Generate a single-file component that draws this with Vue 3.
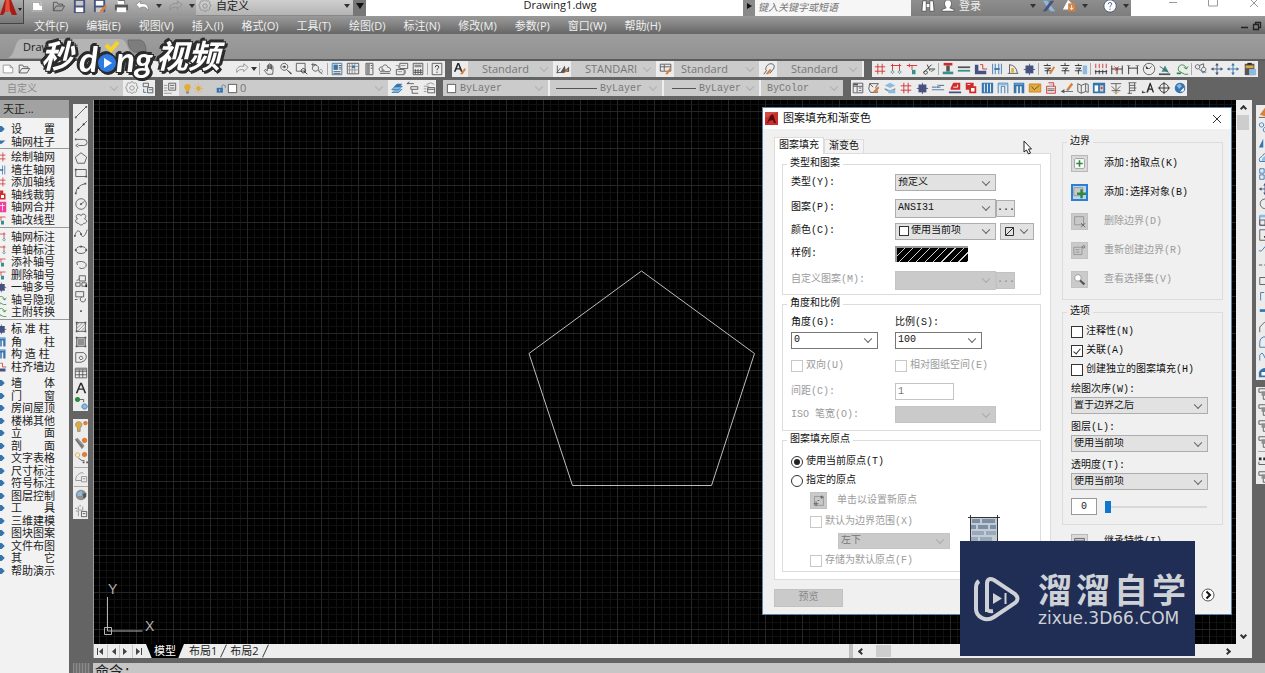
<script setup>
import { h, ref } from 'vue'

const tones = {
  k: '#555555', b: '#3574ad', r: '#d22b2b', g: '#2c8a3c', y: '#e2ad35', o: '#d9803c', w: '#ffffff',
  c: '#8dbbe0', m: '#ee3f9f', n: '#46527f', s: '#8f8f8f', d: '#2a2a2a', l: '#c9c9c9', t: '#37908a'
}

// Each shape is "<tone> <path>": a lower-case tone strokes, an upper-case tone fills.
const glyphs = {
  new: 'W M2 3h9l3 3v7H2z;s M2.5 3.5h8l3 3v6h-11zM10.5 3.5v3h3',
  open: 'k M2.5 12.5v-9h4l1 2h5v2M2.5 12.5l3-5h9l-3 5z',
  save: 'N M2 1h12v14H2z;L M4 2h8v5H4z;W M4 9h8v5H4z',
  saveas: 'N M1 1h12v13H1z;W M3 2h8v5H3z;L M3 9h8v5H3z;O M7 13l6-7 2 2-6 7z',
  print: 'W M4 1h8v5H4z;K M1 6h14v6H1z;W M3 9h10v5H3z;k M4.5 1.5h7v4',
  undo: 'W M1 6l5-4v3c6-1 9 2 8 7-2-3-4-4-8-3v2z;s M1 6l5-4v3c6-1 9 2 8 7-2-3-4-4-8-3v2z',
  redo: 's M15 6l-5-4v3c-6-1-9 2-8 7 2-3 4-4 8-3v2z',
  gear: 's M8 5.5a2.5 2.5 0 1 0 .1 0M6.5 2l.5-1h2l.5 1 1.5.6 1-.6 1.6 1.6-.6 1 .5 1.4 1 .5v2l-1 .5-.6 1.5.6 1-1.6 1.6-1-.6-1.4.5-.5 1h-2l-.5-1-1.5-.6-1 .6L2 11.400l.6-1L2 9 1 8.500v-2L2 6l.6-1.500-.6-1L3.600 2l1 .6z',
  hand: 'k M5 14L1.500 9.500l1-1L5 10V4q1-1 1.500 0V8 2.500q1-1 1.700 0V8 3q1-1 1.600 0v5.500V5q1-1 1.600 0v5.500L11 14z',
  zoom: 'k M6 1.500a4 4 0 1 0 .1 0M9 9l5 5;d M4 5.500h4M6 4v3;K M10 9l5 4-2 1z',
  zoomwin: 'k M1.500 1.500h10v9h-10z;d M10 10l4 4M9.500 7.500a2.500 2.500 0 1 0 .1 0',
  zoomprev: 'k M5 3.500a3.500 3.500 0 1 0 .1 0M8 9l5 5M1 3h5M1 3l2-2M1 3l2 2;s M11 8.500a2 2 0 1 0 .1 0',
  props: 'b M2.500 1.500h11v13h-11z;B M4 3h5v6H4z;k M10 4h3M10 6h3M10 8h3M4 11h8M4 13h8',
  design: 'k M1.500 1.500h13v12h-13z;s M4 2v12M7 2v12M10 2v12M2 5h12M2 9h12;B M7 4h3v3H7z',
  palette: 'k M4.500 1.500h8v13h-8z;S M5 2h4v12H5z;k M10 4h2M10 7h2',
  markup: 'k M2 10c-2-3 1-5 3-4 1-4 6-3 6 0 4 0 4 4 2 5H3zM2 13h12;S M4 6l5 5H4z',
  sheet: 'k M5.500 1.500h9v6h-9zM1.500 8.500h9v6h-9z;s M7 4h5M3 11h5M1 4h3v3M12 9v4h-2',
  calc: 'k M2.500 1.500h11v13h-11z;S M4 3h8v3H4z;k M5 8v6M8 8v6M11 8v6M3 10h10M3 12h10',
  help: 'k M2.500 1.500h11v13h-11z;d M6 6q0-2 2-2t2 2q0 1-2 2.500v1M8 11v1.500',
  astyle: 'D M1 11L5 1h2l4 10H9L8 8.500H4L3 11zM4.500 7h3L6 3z;O M8 14l5-7 2 1-4 6z',
  dimstyle: 'k M1.500 4v9M1 12h9M1 12l4-5;K M5 12l5-8 1 5 4-4v6z;O M8 13l5-5 1 2z',
  tabstyle: 'k M1.500 2.500h12v8h-12zM1.500 5.500h12M6 3v7;O M7 14l5-7 2 1-4 6z',
  mlstyle: 'k M5 10c-2-3 1-8 5-8 4 0 5 3 3 6l-4 5M5 10L2 14;O M4 14l5-6 2 1-4 5z',
  state: 'k M2.500 2.500h6v4h-6zM7.500 7.500h6v6h-6z;b M3 9v4h3M9 10h4',
  layers: 'k M6.500 2.500h8v8h-8z;s M1 5h4M1 8h4M1 11h4M1 14h9;k M8 5h5M8 8h5',
  bulb: 'Y M8 1.500c5 0 6 5 3 8v2H5v-2c-3-3-2-8 3-8z;k M6 13h4M6 14.500h4',
  sun: 'Y M8 4.500a3.500 3.500 0 1 0 .1 0;y M8 1v2M8 13v2M1 8h2M13 8h2M3 3l1.500 1.500M11.500 11.500L13 13M13 3l-1.500 1.500M4.500 11.500L3 13',
  lock: 'B M1 7h9v7H1z;b M8.500 7V4q2-3 5 0v3;W M5 9h1v3H5z',
  square: 'W M2 2h12v12H2z;d M2 2h12v12H2z',
  stack: 'C M2 10l4-4h8l-4 4zM2 13l4-4h8l-4 4z;b M2 10l4-4h8l-4 4zM2 13h8l4-4;B M4 7l4-4h6l-3 4z',
  layprev: 'k M1 3h8M1 3l3-2M5.500 6.500h8v3h-8zM7 10v4h7',
  laystate: 'k M6.500 7.500h8v6h-8zM6.500 9.500h8;s M2 6h6M2 9h3M2 12h3M5 4l5-2 4 2',
  grid: 'r M5.500 2v12M10.500 2v12M2 5.500h12M2 10.500h12',
  gridnum: 'r M4 4v6M12 4v6M2 4h12;t M4 10a1.500 1.500 0 1 0 .1 0M12 10a1.500 1.500 0 1 0 .1 0;r M4 2v2M12 2v2',
  gridone: 'r M2 4h12M8 4v5M5 2v4;T M8 9h4v5H8z',
  cut: 'd M2 12l9-9M6 3l3 7M9 8h6M4 10a2 2 0 1 0 .1 0;g M10 11l4-2',
  beam: 'R M3 1h10v3H3z;K M6 4h4v7H6z;T M2 11h12v3H2z',
  wall: 'K M1 5h14v2H1z;T M1 9h14v2H1z',
  wallbox: 'N M1 3h4v7h9v4H1z;r M7 3h3v5h5',
  opening: 'b M3 2v12M13 2v12M6 2v12M10 2v12;B M5 7h6v2H5z',
  door: 'k M2 13h12M4 3v10M4 3q8 1 9 10;Y M6 7h3v5H6z',
  column: 'N M4 4h9v9H4z;n M8.500 2v13M2 8.500h13',
  texta: 'd M2 4h8M6 2v2M3 7h7L6 9v5M3 10h8;O M8 13l5-8 2 1-5 8z',
  textz: 'd M3 4h10M8 1v3M5 7h6L8 9v5M4 10h9',
  textc: 'd M1 4h8M5 2v2M2 7h6L5 9v5M1 10h8;C M10 4h5v10h-5z',
  dim3: 'd M2 9v5M6 9v5M10 9v5M14 9v5M1 11h14;r M2 2v5M6 2v5M10 2v5M14 2v5',
  dimr: 'd M2 4v10M14 4v10M2 8h12M8 6v8;r M5 5l4 5M10 5l-4 5',
  dim2: 'd M3 4v10M13 4v10M3 7h10;s M1 4h4M11 4h4',
  radius: 'k M8 1.500a6.500 6.500 0 1 0 .1 0;D M8 8L4 4l1 4z;k M8 8l3-3',
  arc: 'K M1 13h13v2H1z;T M4 11l4-7 4 7z;k M2 5l10 7',
  rotate: 'G M2 12h5v2H2z;g M4 10c-2-8 8-9 9-2M13 8l-3-2M13 8l2-3M4 10l7 4h4',
  chain: 'k M4 3a2.500 2.500 0 1 0 .1 0M11 6a2.500 2.500 0 1 0 .1 0M9 11.500h5M6 4l5-2v4;b M6 8l5 5',
  move: 'n M8 2v12M2 8h12;N M8 1l2 3H6zM8 15l2-3H6zM1 8l3-2v4zM15 8l-3-2v4z',
  movec: 'b M8 2v12M2 8h12;B M8 1l2 3H6zM8 15l2-3H6zM1 8l3-2v4zM15 8l-3-2v4z',
  paste: 'K M2 2h11v13H2z;Y M3 4h9v3H3z;C M7 8h8v7H7z;D M5 1h5v2H5z',
  doc: 'k M2.500 2.500h11v11h-11zM2.500 6h11M7 6v7;n M9 8h3M9 11h3;K M3 3h5v2H3z',
  scroll: 'k M3 3h10l-3 4 2 6H4L2 9zM3 3l4 4;O M7 12l6-6 1 2-5 6z',
  sheets: 'C M2 5l6-3 6 3-6 3z;S M2 8l6 3 6-3v2l-6 3-6-3z;C M6 10h8v4H6z',
  dash: 'k M1 7h5M9 5h6;b M1 10h14M8 4v4M6 7h5',
  red: 'R M3 8l3-6h8v8H3z;N M1 12h14v2H1z;w M6 7h5V4',
  redbox: 'R M2 2h9v8H2z;R M6 6h8v8H6z;W M8 8h4v4H8z;w M4 4h3',
  shelf: 'B M2 2h13v12H2z;w M5 3v10M8.500 3v10M12 3v10',
  gate: 'b M2.500 14V2.500h11V14M6 14V6h4v8;C M3 3h10v2H3z',
  gates: 'B M2 2h12v12h-3V6H9v8H7V6H5v8H2z;C M3 3h10v1H3z',
  mail: 'Y M1 3h14v10H1z;o M1.500 3.500h13v9h-13z;k M4 6l3 4 6-5',
  printred: 'r M3 6h10v8H3zM5 2h6v4;k M4 9h8M4 11h8;L M6 3h4v3H6z',
  brush: 'O M7 10l6-8 2 2-6 8z;b M2 12h13;K M1 12l4-3v5z',
  book: 'k M2 3l4 2v9l-4-2zM6 5l5-2v9l-5 2M11 3l3 1v9l-3-1',
  window: 'B M1 2h14v12H1z;W M3 5h4v7H3z;L M9 5h4v7H9z;R M10 7h2v2h-2z',
  tree: 'k M2 3h12M8 3v12M3 6l4 4M13 6l-4 4M3 11h10;y M5 13h6',
  bars: 'k M4 2h9M5 2v13M5 5h7M5 8h8M5 11h7M3 14h5M11 2v9',
  triA: 'D M6 13L10 2h1l4 11h-1.500L12 10H9l-1 3zM9.500 8.500h2.500L10.500 5z;d M1 13h4M2 11v3',
  target: 'd M8 3a5 5 0 1 0 .1 0M8 1v14M1 8h14',
  globe: 'B M8 2a6 6 0 1 0 .1 0z;C M4 5l4-2 2 3-3 3z;W M8 12l5-5-1 5z',
  line: 'k M2 14L14 2;K M1 13h2v2H1zM13 1h2v2h-2z',
  xline: 'k M1 15L15 1;D M4 10h2v2H4zM10 4h2v2h-2z',
  pline: 'k M3 5h8q4 0 4 3.500T11 12H5M5 10l-3 2 3 2;K M1 4h2v2H1z',
  polygon: 'k M8 2l6.500 5-2.500 7H4L1.500 7z',
  rect: 'k M2 4h12v8H2z;K M1 3h2v2H1zM13 11h2v2h-2z',
  arc2: 'k M2 14Q3 5 13 3;K M1 13h2v2H1zM12 2h2v2h-2zM4 7h2v2H4z',
  circle: 'k M8 2a6 6 0 1 0 .1 0M8 8l4-3;K M7 7h2v2H7z',
  cloud: 'k M5 13c-4 0-4-5-1-5-4-4 1-7 4-4 3-4 8 0 4 4 4 1 3 5-1 5-2 3-4 2-6 0z',
  spline: 'k M1 10C3 2 7 4 8 8s4 5 7-5;K M0 9h2v2H0zM7 7h2v2H7z',
  ellipse: 'k M8 4C0 4 0 12 8 12s8-8 0-8;K M7 3h2v2H7zM1 7h2v2H1zM13 7h2v2h-2z',
  earc: 'k M3 5c4-2 11-1 11 3s-6 5-8 3M3 5l1 3',
  block: 'k M2 10h5v4H2zM6 2h7v6H6zM3 8l3-3M9 10h5v4H9z;D M13 12h2v3h-2z',
  mkblock: 'k M2 3h9v6H2zM9 9a3 3 0 1 0 4 2M1 12h3',
  dot: 'K M7 7h2v2H7z',
  hatch: 'k M3 3h10v10H3z;s M3 6l3-3M3 10l7-7M4 13l9-9M8 13l5-5;K M2 2h2v2H2zM12 2h2v2h-2zM2 12h2v2H2zM12 12h2v2h-2z',
  grad: 'S M4 4h8v8H4z;k M3 3h10v10H3z;K M2 2h2v2H2zM12 2h2v2h-2zM2 12h2v2H2zM12 12h2v2h-2z',
  region: 'k M2 3h9q4 2 3 6t-6 5H2zM8 7a2 2 0 1 0 .1 0',
  table: 'k M1.500 2.500h13v11h-13zM1.500 6h13M1.500 10h13M6 3v10M10 3v10;S M2 3h12v2H2z',
  mtext: 'D M2 14L7 2h2l5 12h-2l-1.500-4h-5L4 14zM6 8.500h4L8 4z',
  addsel: 'G M4 1a3 3 0 1 0 .1 0z;C M12 9a3 3 0 1 0 .1 0z;k M7 4h4v3;b M12 9a3 3 0 1 0 .1 0',
  lightset: 'Y M5 2c5 0 5 5 2 7v4H4V9C1 7 1 2 5 2z;s M5 2c5 0 5 5 2 7v4H4V9C1 7 1 2 5 2z;O M13 1a2.500 2.500 0 1 0 .1 0z',
  pinset: 'S M1 4l3-2 8 9-3 4z;O M12 2a3 3 0 1 0 .1 0z;k M2 4l8 9',
  dotset: 'y M4 2a2.500 2.500 0 1 0 .1 0;O M12 1a3 3 0 1 0 .1 0z;k M5 8l4 3h3;K M10 12h2v2h-2zM14 12h2v2h-2z',
  viewset: 's M2 12C1 6 9 1 11 4M2 12h6M8.500 7.500h6v6h-6zM10 10h3',
  ball: 'S M8 2a6 6 0 1 0 .1 0z;C M4 5l5-2v6H4z;K M10 7l4-2v5l-3 2z',
  sunset: 's M5 3v4h5V3M2 8h3M5 8v6M1 5h3M7 1v2;k M8.500 8.500h6v6h-6zM10 11h3',
  erase: 'O M2 10l6-8 6 3-5 7z;k M1 13h8', copy: 'b M4 2a2.500 2.500 0 1 0 .1 0M9 7a3 3 0 1 0 .1 0',
  mirror: 'B M1 13L6 3v10zM8 3l6 10H8z', offset: 'b M2 12c-2-6 3-4 4-8 4-3 9 0 9 8z;C M4 11q1-5 6-6v6z',
  array: 'b M2 2h5v5H2zM9 2h5v5H9zM2 9h5v5H2zM9 9h5v5H9z', rot: 'k M12 4a5.500 5.500 0 1 0 1 6M12 1v4H8',
  scale: 'b M2 3h12v11H2z;k M2 8h6v6H2z;C M2 2h12v3H2z', stretch: 'k M2 2h10v12H2z;D M7 9h5V7l3 3-3 3v-2H7z',
  trim: 'b M1 9h3l6-7;k M8 9h6', extend: 'k M1 8h4M7 8h2M11 8h4', breakp: 'k M2 4h12v8H2z',
  brk: 'b M3 13V4h4;k M9 4h5v9', join: 'B M2 6h12v3H2z', chamfer: 'k M2 14V8l6-6h6', fillet: 'b M2 14V9q0-7 7-7h6v12z',
  blend: 'b M2 12V6q3-5 5 1t7 3', explode: 'B M1 8q5-7 12-3v9H1z;W M4 8h4v4H4z',
  order: 'k M1 2h11v4H1zM6 9h9v5H6z;S M4 5h8v5H4z', abc: 'k M1 9v3h12;D M1 4h3v3H1zM6 4h3v3H6zM11 4h3v3h-3z',
  binoc: 'W M2 2h4v12H1zM10 2h4l1 12h-5zM6 5h4v4H6z;k M2 2h4v12H1zM10 2h4l1 12h-5zM6 5h4',
  person: 'W M8 1c6 0 4 8 2 9l5 2v2H1v-2l5-2C4 9 2 1 8 1z;k M8 1c6 0 4 8 2 9l5 2v2H1v-2l5-2C4 9 2 1 8 1z',
  exch: 'C M1 2h5l9 12h-5z;N M10 2h4l-9 12H1z', cloudA: 'W M1 12L7 1l5 5v6z;O M7 5h8v9H7z;w M11 7v5M9 10l2 2 2-2',
  qmark: 'W M8 1a7 7 0 1 0 .1 0z;n M8 1a7 7 0 1 0 .1 0M6 6q0-2 2-2t2 2q0 1-2 2.500v1M8 11v1.500',
  arrow: 'B M4 4h5l4 4-4 4H4z',
  down: 'B M2 6h12l-6 5z',
  pink: 'M M1 1h14v14H1z;w M5 3v10M10 3v10M3 6h10',
  pick: 'W M3 2h10l1 1v10l-1 1H3l-1-1V3z;s M3 2h10l1 1v10l-1 1H3l-1-1V3z;G M7 4h2v3h3v2H9v3H7V9H4V7h3z',
  select: 'L M1 2h11v10H1z;s M1 2h11v10H1z;G M9 4h3v4h4v3h-4v4H9v-4H5V8h4z',
  remove: 'L M2 2h11v10H2z;s M2 2h11v10H2z;k M10 10l5 5M15 10l-5 5',
  redobd: 'L M1 4h10v9H1z;s M1 4h10v9H1zM3 7h5M3 10h5;k M13 2a1.500 1.500 0 1 0 .1 0',
  view: 'W M6 2a4 4 0 1 0 .1 0z;s M6 2a4 4 0 1 0 .1 0;K M9 8l6 5-2 2-5-5z',
  inherit: 'L M2 3h12v10H2z;k M2 3h12v10H2zM2 6h12M8 13l6-5',
  origin: 'L M3 3h11v11H3z;s M3 3h11v11H3z;k M5 9v6M2 12h6M12 2v4M10 4h4M7 8h2'
}
const shape = (s) => {
  const code = s[0]
  const tone = tones[code.toLowerCase()]
  return code === code.toLowerCase()
    ? h('path', { d: s.slice(2), fill: 'none', stroke: tone })
    : h('path', { d: s.slice(2), fill: tone })
}
const Icon = (p) => h('svg', { viewBox: '0 0 16 16', 'aria-hidden': 'true' }, (glyphs[p.name] || '').split(';').filter(Boolean).map(shape))
Icon.props = ['name']

const quick = ['new', 'open', 'save', 'saveas', 'print']
const menus = ['文件(F)', '编辑(E)', '视图(V)', '插入(I)', '格式(O)', '工具(T)', '绘图(D)', '标注(N)', '修改(M)', '参数(P)', '窗口(W)', '帮助(H)']
const zoomTools = ['hand', 'zoom', 'zoomwin', 'zoomprev', '|', 'props', 'design', 'palette', 'markup', 'sheet', 'calc', '|', 'help']
const styles = [
  { icon: 'astyle', text: 'Standard', pad: true }, { icon: 'dimstyle', text: 'STANDARI', pad: true },
  { icon: 'tabstyle', text: 'Standard', pad: false }, { icon: 'mlstyle', text: 'Standard', pad: true }
]
const archTop = ['grid', 'gridnum', 'gridone', 'cut', '|', 'beam', 'wall', 'wallbox', 'opening', 'door', 'column', '|', 'texta', 'textz', 'textc', '|', 'dim3', 'dimr', 'dim2', 'radius', 'arc', 'rotate', '|', 'chain', 'move', 'movec', 'paste']
const archLow = ['doc', 'scroll', 'sheets', 'grid', 'column', 'dash', 'red', 'redbox', 'shelf', 'gate', 'gates', 'mail', 'printred', 'brush', 'book', 'window', 'tree', 'bars', 'triA', 'target', 'globe']
const drawTools = ['line', 'xline', 'pline', 'polygon', 'rect', 'arc2', 'circle', 'cloud', 'spline', 'ellipse', 'earc', 'block', 'mkblock', 'dot', 'hatch', 'grad', 'region', 'table', 'mtext', 'addsel']
const lightTools = ['lightset', 'pinset', 'dotset', '|', 'viewset', '|', 'ball', 'sunset']
const editTools = ['erase', 'copy', 'mirror', 'offset', 'array', 'move', 'rot', 'scale', 'stretch', 'trim', 'extend', 'breakp', 'brk', 'join', 'chamfer', 'fillet', 'blend', 'explode']
const orderTools = ['order', 'order', 'order', 'order', '|', 'abc', 'order']

const palette = [
  [['arrow', '设 置'], ['down', '轴网柱子']],
  [['grid', '绘制轴网'], ['opening', '墙生轴网'], ['grid', '添加轴线'], ['redbox', '轴线裁剪'], ['pink', '轴网合并'], ['gridone', '轴改线型']],
  [['gridnum', '轴网标注'], ['gridnum', '单轴标注'], ['gridone', '添补轴号'], ['gridone', '删除轴号'], ['column', '一轴多号'], ['rotate', '轴号隐现'], ['rotate', '主附转换']],
  [['column', '标 准 柱'], ['gates', '角 柱'], ['gates', '构 造 柱'], ['wallbox', '柱齐墙边']],
  ['墙 体', '门 窗', '房间屋顶', '楼梯其他', '立 面', '剖 面', '文字表格', '尺寸标注', '符号标注', '图层控制', '工 具', '三维建模', '图块图案', '文件布图', '其 它', '帮助演示'].map((t) => ['arrow', t])
]

const bounds = [
  { text: '添加:拾取点(K)', icon: 'pick', off: false },
  { text: '添加:选择对象(B)', icon: 'select', off: false },
  { text: '删除边界(D)', icon: 'remove', off: true },
  { text: '重新创建边界(R)', icon: 'redobd', off: true },
  { text: '查看选择集(V)', icon: 'view', off: true }
]

const options = ref([
  { id: 'opt-annot', text: '注释性(N)', on: false },
  { id: 'opt-assoc', text: '关联(A)', on: true },
  { id: 'opt-separate', text: '创建独立的图案填充(H)', on: false }
])
const drops = [
  { id: 'draw-order', text: '绘图次序(W):', value: '置于边界之后' },
  { id: 'layer', text: '图层(L):', value: '使用当前项' },
  { id: 'transparency', text: '透明度(T):', value: '使用当前项' }
]
const origin = ref('current')
const opacity = ref(0)
</script>

<template>
  <div class="app">
    <button class="appmenu" aria-label="应用程序菜单">
      <svg viewBox="0 0 24 24"><path d="M0 15L6 -3h4l7 18h-5l-2-4-5 1-2 3z" fill="#a81c16" /><path d="M6 -3h3l1 14-5 1z" fill="#e2503b" /><path d="M18 8h4l-2 3z" fill="#222" /></svg>
    </button>
    <header class="title">
      <div class="quick">
        <button v-for="q in quick" :key="q" class="tool" :aria-label="q"><Icon :name="q" /></button>
        <button class="tool" aria-label="undo"><Icon name="undo" /></button><i class="caret"></i>
        <button class="tool" aria-label="redo"><Icon name="redo" /></button><i class="caret"></i>
      </div>
      <button class="workspace"><Icon class="ic" name="gear" /><span>自定义</span><i class="caret"></i></button>
      <button class="more" aria-label="更多"><i class="caret"></i></button>
      <h1>Drawing1.dwg</h1>
      <button class="expand" aria-label="展开搜索"><i></i></button>
      <input class="search" aria-label="搜索" placeholder="键入关键字或短语" />
      <div class="account">
        <Icon class="ic" name="binoc" /><Icon class="ic" name="person" /><button class="login">登录</button><i class="caret far"></i>
        <Icon class="ic" name="exch" /><Icon class="ic" name="cloudA" /><i class="caret"></i><Icon class="ic helpic" name="qmark" /><i class="caret"></i>
      </div>
      <div class="winctl">
        <svg viewBox="0 0 134 12"><path d="M38 2.500h8M77.500 -2v8h9v-8M119 -1l8 8M127 -1l-8 8" fill="none" stroke="#999" /></svg>
      </div>
    </header>

    <nav class="menu">
      <a v-for="m in menus" :key="m" href="#">{{ m }}</a>
      <svg class="mdi" viewBox="0 0 22 10"><path d="M1 6.500h7M13.500 3.500h5v5h-5zM15.500 3V1.500h5v5H19" fill="none" stroke="#222" stroke-width="1.300" /></svg>
    </nav>

    <div class="tabs">
      <svg class="tabshape" viewBox="0 0 150 23"><path d="M8 23C16 20 14 4 22 4h98c8 0 8 16 16 19z" fill="#b4b4b4" /><path d="M128 5h12q6 1 6 12h-12q-6-4-6-12z" fill="#7d7d7d" stroke="#6c6c6c" /></svg>
      <a class="doc" href="#">Drawing1*</a>
    </div>

    <div class="bars">
      <div class="bar">
        <div class="strip std">
          <Icon class="ic" name="new" /><Icon class="ic" name="open" /><Icon class="ic redo" name="redo" /><i class="caret"></i><b class="sep"></b>
          <template v-for="(t, i) in zoomTools" :key="i"><b v-if="t === '|'" class="sep"></b><Icon v-else class="ic" :name="t" /></template>
        </div>
        <div class="strip stylebar">
          <div v-for="(s, i) in styles" :key="i" class="stylecell">
            <Icon class="ic" :name="s.icon" />
            <span class="combo flat"><select :class="{ pad: s.pad }" :aria-label="'样式 ' + (i + 1)"><option>{{ s.text }}</option></select></span>
          </div>
        </div>
        <div class="strip arch">
          <template v-for="(t, i) in archTop" :key="i"><b v-if="t === '|'" class="sep"></b><Icon v-else class="ic" :name="t" /></template>
        </div>
      </div>
      <div class="bar">
        <div class="strip ws">
          <span class="combo flat"><select class="cjk" aria-label="工作空间"><option>自定义</option></select></span>
          <Icon class="ic" name="gear" /><Icon class="ic" name="state" />
        </div>
        <div class="strip lay">
          <Icon class="ic" name="layers" />
          <div class="laybox">
            <Icon class="sm" name="bulb" /><Icon class="sm" name="sun" /><i class="blank"></i><Icon class="sm" name="lock" /><Icon class="sm" name="square" />
            <span class="combo flat"><select aria-label="图层"><option>0</option></select></span>
          </div>
          <Icon class="ic" name="stack" /><Icon class="ic" name="layprev" /><Icon class="ic" name="laystate" />
        </div>
        <div class="strip bylay">
          <div class="prop color"><Icon class="sm" name="square" /><span class="combo flat"><select class="mono" aria-label="颜色控制"><option>ByLayer</option></select></span></div>
          <div class="prop ltype"><i class="dash"></i><span class="combo flat"><select class="mono" aria-label="线型控制"><option>ByLayer</option></select></span></div>
          <div class="prop lweight"><i class="dash"></i><span class="combo flat"><select class="mono" aria-label="线宽控制"><option>ByLayer</option></select></span></div>
          <div class="prop pstyle"><span class="combo flat"><select class="mono" aria-label="打印样式"><option>ByColor</option></select></span></div>
        </div>
        <div class="strip archlow"><Icon v-for="(t, i) in archLow" :key="i" class="ic" :name="t" /></div>
      </div>
    </div>

    <div class="body">
      <aside class="palette">
        <h2>天正...</h2>
        <ul v-for="(g, gi) in palette" :key="gi">
          <li v-for="row in g" :key="row[1]"><Icon class="pic" :name="row[0]" /><a href="#" :class="{ spread: row[1].length === 3 }">{{ row[1] }}</a></li>
        </ul>
      </aside>

      <div class="work">
        <div class="stage">
          <div class="toolcol">
            <div class="vstrip draw"><Icon v-for="(t, i) in drawTools" :key="i" class="ic" :name="t" /></div>
            <div class="vstrip light"><template v-for="(t, i) in lightTools" :key="i"><b v-if="t === '|'" class="hsep"></b><Icon v-else class="ic" :name="t" /></template></div>
          </div>

          <div class="view">
            <main class="canvas">
              <svg class="sheet">
                <defs>
                  <pattern id="gridlines" x="5" y="11" width="37" height="37" patternUnits="userSpaceOnUse">
                    <path d="M7.500 0v37M15.500 0v37M22.500 0v37M30.500 0v37M0 7.500h37M0 15.500h37M0 22.500h37M0 30.500h37" stroke="#111" />
                    <path d="M.5 0v37M0 .5h37" stroke="#262626" />
                  </pattern>
                </defs>
                <rect width="100%" height="100%" fill="#000" /><rect width="100%" height="100%" fill="url(#gridlines)" />
                <path d="M547.500 171L660.500 253.500 617.500 385.500H478.500L435 253.500z" fill="none" stroke="#bdbdbd" />
                <path d="M13.500 497v34h35M10.500 527.500h7v7h-7z" fill="none" stroke="#b5b5b5" />
                <text x="14" y="494" class="axis">Y</text><text x="51" y="531" class="axis">X</text>
              </svg>

              <section class="dialog" role="dialog" aria-label="图案填充和渐变色">
                <div class="dtitle">
                  <svg class="logo" viewBox="0 0 13 13"><path d="M0 0h13v13H0z" fill="#c9302c" /><path d="M2 11L6 2h2l3 9H9L8 8 4 9l-1 2z" fill="#5c0d0b" /><path d="M0 0h13L0 6z" fill="#e0635c" opacity=".5" /></svg>
                  <h3>图案填充和渐变色</h3>
                  <button class="close" aria-label="关闭"><svg viewBox="0 0 10 10"><path d="M1 1l8 8M9 1L1 9" stroke="#333" fill="none" /></svg></button>
                </div>
                <div class="dbody">
                  <div class="left">
                    <div class="dtabs"><button class="on">图案填充</button><button>渐变色</button></div>
                    <div class="panel">
                      <fieldset>
                        <legend>类型和图案</legend>
                        <div class="types">
                          <label for="type">类型(Y):</label><div><span class="combo w100"><select id="type"><option>预定义</option></select></span></div>
                          <label for="pattern">图案(P):</label><div><span class="combo w100 tall"><select id="pattern"><option>ANSI31</option></select></span><button class="dots">...</button></div>
                          <label for="color">颜色(C):</label>
                          <div><span class="combo w100"><i class="box"></i><select id="color"><option>使用当前项</option></select></span>
                            <span class="combo bg"><svg viewBox="0 0 11 11"><path d="M1.500 1.500h8v8h-8zM1.500 9.500l8-8" fill="none" stroke="#333" /></svg><select aria-label="背景色"><option></option></select></span></div>
                          <span>样例:</span><div><button class="sample" aria-label="ANSI31"></button></div>
                          <label for="custom" class="dim">自定义图案(M):</label><div><span class="combo w100 tall off"><select id="custom" disabled></select></span><button class="dots" disabled>...</button></div>
                        </div>
                      </fieldset>
                      <fieldset>
                        <legend>角度和比例</legend>
                        <div class="angles">
                          <label for="angle">角度(G):</label><label for="scale">比例(S):</label>
                          <div><span class="combo edit"><select id="angle"><option>0</option></select></span></div><div><span class="combo edit"><select id="scale"><option>100</option></select></span></div>
                          <label class="chk dim"><input type="checkbox" disabled />双向(U)</label><label class="chk dim"><input type="checkbox" disabled />相对图纸空间(E)</label>
                          <label for="space" class="dim">间距(C):</label><div><input id="space" class="num" value="1" disabled /></div>
                          <label for="iso" class="dim">ISO 笔宽(O):</label><div><span class="combo w100 off"><select id="iso" disabled></select></span></div>
                        </div>
                      </fieldset>
                      <fieldset>
                        <legend>图案填充原点</legend>
                        <div class="origin">
                          <div class="olist">
                            <label class="chk"><input v-model="origin" type="radio" value="current" />使用当前原点(T)</label>
                            <label class="chk"><input v-model="origin" type="radio" value="picked" />指定的原点</label>
                            <div class="in1 pick"><button class="sq" disabled aria-label="单击以设置新原点"><Icon class="ic" name="origin" /></button><span>单击以设置新原点</span></div>
                            <label class="chk dim in1"><input type="checkbox" disabled />默认为边界范围(X)</label>
                            <div class="in2"><span class="combo off"><select disabled aria-label="原点位置"><option>左下</option></select></span></div>
                            <label class="chk dim in1"><input type="checkbox" disabled />存储为默认原点(F)</label>
                          </div>
                          <svg class="brick" viewBox="0 0 32 34"><path d="M2 3h27v30H2z" fill="#c3ccd6" /><path d="M4 4h8v4H4zM14 4h13v4H14zM3 10h5v4H3zM10 10h10v4H10zM22 10h6v4h-6z" fill="#7d8fa3" /><path d="M4 16h12v4H4zM18 16h10v4H18zM3 22h7v5H3zM12 22h12v5H12z" fill="#9aa9b8" /><path d="M2.500 0v34M29.500 0v34M0 2.500h32" stroke="#333" fill="none" /></svg>
                        </div>
                      </fieldset>
                    </div>
                    <button class="preview" disabled>预览</button>
                  </div>

                  <div class="right">
                    <fieldset>
                      <legend>边界</legend>
                      <div class="bounds">
                        <div v-for="b in bounds" :key="b.icon" class="brow" :class="{ dim: b.off }">
                          <button class="sq" :class="{ hot: b.icon === 'select' }" :disabled="b.off" :aria-label="b.text"><Icon class="ic" :name="b.icon" /></button><span>{{ b.text }}</span>
                        </div>
                      </div>
                    </fieldset>
                    <fieldset class="opts">
                      <legend>选项</legend>
                      <label v-for="o in options" :key="o.id" class="chk"><input :id="o.id" v-model="o.on" type="checkbox" />{{ o.text }}</label>
                      <div v-for="d in drops" :key="d.id" class="drop">
                        <label :for="d.id">{{ d.text }}</label>
                        <span class="combo"><select :id="d.id"><option>{{ d.value }}</option></select></span>
                      </div>
                      <div class="opacity"><input v-model="opacity" class="num" aria-label="透明度值" /><input v-model="opacity" type="range" min="0" max="90" aria-label="透明度" /></div>
                    </fieldset>
                    <div class="brow inherit"><button class="sq" aria-label="继承特性(I)"><Icon class="ic" name="inherit" /></button><span>继承特性(I)</span></div>
                    <button class="moreopts" aria-label="更多选项"><svg viewBox="0 0 14 14"><circle cx="7" cy="7" r="6" fill="#fff" stroke="#555" /><path d="M5.500 3.500L9 7l-3.500 3.500" fill="none" stroke="#111" stroke-width="2" /></svg></button>
                  </div>
                </div>
              </section>

              <svg class="cursor" viewBox="0 0 9 15"><path d="M1 1v11l2.500-2 2 4 2-1-2-4h3z" fill="#fff" stroke="#222" /></svg>
            </main>

            <footer class="layouts">
              <svg class="navs" viewBox="0 0 52 13"><path d="M13.500 0v13M25.500 0v13M38.500 0v13" stroke="#c4c4c4" /><path d="M9 3L5 6.500 9 10zM22 3l-4 3.500 4 3.500zM29 3l4 3.500-4 3.500zM42 3l4 3.500-4 3.500z" fill="#444" /><path d="M3.500 3v7M47.500 3v7" stroke="#444" /></svg>
              <a class="model" href="#"><span>模型</span></a><a href="#">布局1</a><i class="slash"></i><a href="#">布局2</a><i class="slash"></i>
              <div class="hscroll"><i class="grip"></i><i class="chev lt"></i><i class="hthumb"></i><i class="chev gt"></i></div>
            </footer>
          </div>

          <div class="vscroll"><i class="chev up"></i><i class="vthumb"></i><i class="chev dn"></i></div>
          <div class="editcol">
            <div class="vstrip edits"><Icon v-for="(t, i) in editTools" :key="i" class="ic" :name="t" /></div>
            <div class="vstrip ord"><template v-for="(t, i) in orderTools" :key="i"><b v-if="t === '|'" class="hsep"></b><Icon v-else class="ic" :name="t" /></template></div>
          </div>
        </div>
        <div class="cmd"><i class="dotgrip"></i><div class="prompt">命令:</div></div>
      </div>
    </div>

    <svg class="mark" viewBox="0 0 196 50" role="img" aria-label="秒dong视频">
      <g class="face">
        <text x="5" y="33" class="zh">秒</text><text x="43" y="37" class="en">d</text><text x="80" y="37" class="en">ng</text><text x="120" y="33" class="zh">视频</text>
        <circle cx="71" cy="28" r="9" fill="#2f7be6" />
      </g>
      <path d="M68 23l8 5-8 5z" fill="#fff" /><path d="M70 10l5 5 7-8" fill="none" stroke="#f5d32d" stroke-width="4" />
    </svg>

    <div class="badge">
      <svg viewBox="0 0 48 50"><path d="M13 38V10q0-7 7-4l21 14q5 5 0 9L20 43q-6 4-12 1-6-3-6-9V14q0-5 3-7" fill="none" stroke="#ced1d6" stroke-width="4" /><path d="M13 34q0 4 6 3" fill="none" stroke="#ced1d6" stroke-width="4" /><path d="M19 19l9 5.500-9 5.500z" fill="#ced1d6" /><path d="M31.500 19v11" stroke="#ced1d6" stroke-width="2" /></svg>
      <div><p class="big"><span>溜</span><span>溜</span><span>自</span><span>学</span></p><p class="url">zixue.3D66.COM</p></div>
    </div>
  </div>
</template>

<style>
body { overflow: hidden; background: #666; }
</style>

<style scoped>
* { box-sizing: border-box; }
.app { position: relative; display: flex; flex-direction: column; height: 100vh; overflow: hidden; background: #646464; font: 11px/14px "Open Sans", "Noto Sans CJK SC", sans-serif; color: #222; }
button { font: inherit; color: inherit; padding: 0; border: 0; background: none; white-space: nowrap; }
a { color: inherit; text-decoration: none; white-space: nowrap; }
h1, h2, h3, p, ul { margin: 0; padding: 0; font-weight: 400; }
svg { display: block; flex: none; }
i { flex: none; }
.ic { width: 14px; height: 14px; flex: none; }
.sm { width: 11px; height: 11px; flex: none; }
.caret { border: 3px solid transparent; border-top: 4px solid #333; border-bottom: 0; width: 0; height: 4px; }

.appmenu { position: absolute; z-index: 3; left: 0; top: 0; width: 24px; height: 24px; background: linear-gradient(#aaa, #777); border-right: 1px solid #444; border-bottom: 1px solid #444; }
.appmenu svg { width: 24px; height: 24px; }
.title { display: flex; height: 16px; flex: none; background: #fff; }
.title > * { height: 16px; padding-bottom: 4px; }
.quick { display: flex; align-items: center; gap: 6px; width: 196px; padding-left: 30px; background: linear-gradient(#b4b4b4, #969696); }
.tool { width: 15px; height: 15px; flex: none; }
.workspace { display: flex; align-items: center; gap: 4px; width: 157px; padding-left: 2px; background: linear-gradient(#cfcfcf, #b4b4b4); border-bottom: 1px solid #888; }
.workspace span { line-height: 12px; }
.workspace .caret { margin-left: auto; margin-right: 3px; }
.more { display: flex; align-items: center; justify-content: center; width: 13px; background: #777; }
.more .caret { border-top-width: 6px; border-top-color: #111; height: 6px; border-left-width: 4px; border-right-width: 4px; }
.title h1 { flex: 1; text-align: center; padding-left: 11px; font-size: 11px; line-height: 9px; }
.expand { width: 12px; background: #8a8a8a; display: flex; align-items: center; justify-content: center; }
.expand i { border: 3px solid transparent; border-left: 5px solid #111; border-right: 0; }
.search { width: 156px; border: 0; background: #f6f6f6; font: italic 10px "Noto Sans CJK SC", sans-serif; padding: 0 3px 4px; outline: 0; }
.search::placeholder { color: #777; }
.account { display: flex; align-items: center; width: 220px; padding-left: 4px; background: linear-gradient(#8e8e8e, #7d7d7d); color: #eee; }
.account .ic { margin-left: 6px; }
.login { margin-left: 4px; line-height: 12px; }
.account .caret { margin-left: 6px; }
.account .far { margin-left: 49px; }
.account .helpic { margin-left: 15px; }
.winctl { width: 134px; }
.winctl svg { width: 134px; height: 12px; }

.menu { display: flex; align-items: center; gap: 18px; height: 18px; flex: none; padding: 2px 3px 0 34px; background: linear-gradient(#999, #848484 45%, #656565); color: #f0f0f0; }
.mdi { width: 22px; height: 10px; margin-left: auto; }
.tabs { display: flex; height: 27px; flex: none; background: linear-gradient(#9d9d9d, #929292); border-bottom: 2px solid #5c5c5c; position: relative; }
.tabshape { width: 150px; height: 25px; }
.doc { position: absolute; left: 23px; top: 6px; }

.bars { display: flex; flex-direction: column; gap: 3px; height: 39px; flex: none; }
.bar { display: flex; height: 16px; }
.strip { display: flex; align-items: center; background: #ececec; flex: none; height: 16px; overflow: hidden; }
.sep { width: 1px; height: 12px; background: #aaa; flex: none; }
.std { width: 445px; gap: 1px; padding: 0 1px; margin-right: 7px; justify-content: space-between; }
.std .redo { margin-left: 202px; }
.stylebar { width: 412px; background: #cbcbcb; margin-right: 8px; }
.stylecell { display: flex; flex: 1; align-items: center; height: 16px; border-right: 2px solid #eee; }
.stylecell .ic { width: 16px; background: #ececec; height: 16px; padding: 1px; }
.stylecell select { padding-left: 7px; }
.arch { width: 386px; justify-content: space-between; padding: 0 1px; }
.ws { width: 155px; margin-right: 8px; gap: 2px; }
.ws .combo { flex: 1; }
.lay { width: 273px; margin-right: 7px; gap: 2px; }
.laybox { display: flex; align-items: center; flex: 1; height: 16px; padding-left: 3px; background: #cbcbcb; }
.laybox .blank { width: 12px; }
.laybox .combo { flex: 1; }
.bylay { width: 400px; margin-right: 8px; background: #cbcbcb; }
.prop { display: flex; align-items: center; height: 16px; border-right: 2px solid #eee; padding-left: 3px; }
.prop .combo { flex: 1; }
.prop.color { width: 107px; } .prop.ltype { width: 114px; padding-left: 6px; } .prop.lweight { width: 97px; padding-left: 8px; } .prop.pstyle { flex: 1; border: 0; }
.dash { height: 1px; background: #555; width: 41px; } .lweight .dash { width: 24px; }
.archlow { width: 336px; justify-content: space-between; }

.combo { position: relative; display: inline-flex; align-items: center; height: 17px; min-width: 0; background: #e2e2e2; border: 1px solid #adadad; }
.combo::after { content: ""; position: absolute; right: 6px; top: 50%; width: 5px; height: 5px; border: solid #666; border-width: 0 1px 1px 0; transform: translateY(-70%) rotate(45deg); pointer-events: none; }
select { appearance: none; width: 100%; height: 100%; min-width: 0; padding: 0 14px 0 2px; border: 0; background: none; font: inherit; color: inherit; outline: 0; opacity: 1; }
.combo.flat { flex: 1; height: 16px; border: 0; background: #cbcbcb; color: #777; }
.combo.flat::after { border-color: #b0b0b0; }
.flat select.pad { padding-left: 14px; }
.flat select.mono { font: 10px "Liberation Mono", monospace; padding-left: 3px; }
.flat select.cjk { padding-left: 7px; font-size: 10px; color: #8a8a8a; }

.body { display: flex; flex: 1; min-height: 0; }
.palette { width: 69px; flex: none; background: #f2f2f2; overflow: hidden; }
.palette h2 { height: 18px; margin-bottom: 5px; padding-left: 3px; background: #a2a2a2; font-size: 11px; line-height: 18px; }
.palette ul { list-style: none; }
.palette ul + ul { border-top: 1px solid #999; margin-top: 1px; padding-top: 3px; }
.palette h2 + ul + ul { margin-top: 0; padding-top: 2px; }
.palette ul:last-child { border: 0; }
.palette li { display: flex; align-items: center; height: 12px; }
.palette li:nth-child(even) { height: 13px; }
.pic { width: 12px; height: 12px; margin-left: -5px; margin-right: 4px; }
.palette li a { width: 44px; line-height: 12px; }
.palette .spread { text-align: justify; text-align-last: justify; }

.work { display: flex; flex-direction: column; flex: 1; min-width: 0; }
.stage { display: flex; flex: 1; min-height: 0; }
.toolcol { width: 25px; flex: none; padding: 4px 5px 0 4px; border-right: 1px solid #999; background: #646464; }
.vstrip { display: grid; grid-auto-rows: 1fr; align-items: center; justify-items: center; background: #ececec; }
.draw { height: 307px; margin-bottom: 8px; }
.vstrip.light { height: 100px; display: flex; flex-direction: column; justify-content: space-between; padding: 1px 0; }
.hsep { height: 1px; width: 14px; background: #aaa; }
.view { display: flex; flex-direction: column; flex: 1; min-width: 0; }
.canvas { position: relative; flex: 1; min-height: 0; background: #000; }
.sheet { width: 100%; height: 100%; position: absolute; }
.axis { font: 14px "Liberation Sans", sans-serif; fill: #b0b0b0; }
.cursor { position: absolute; right: 204px; top: 40px; width: 9px; height: 15px; }

.layouts { display: flex; align-items: center; height: 14px; flex: none; background: #ededed; }
.navs { width: 52px; height: 13px; }
.layouts a { padding: 0 5px; line-height: 14px; font-size: 11px; }
.layouts .model { color: #fff; background: #000; clip-path: polygon(0 0, 100% 0, 85% 100%, 15% 100%); padding: 0 8px; }
.slash { width: 1px; height: 14px; background: #444; transform: rotate(25deg); margin: 0 1px; }
.hscroll { display: flex; align-items: center; width: 387px; margin-left: auto; height: 14px; }
.grip { width: 4px; height: 14px; background: #c0c0c0; margin-right: 6px; }
.hthumb { width: 15px; height: 12px; background: #cdcdcd; margin-left: 12px; }
.chev { width: 5px; height: 5px; border: solid #333; border-width: 2px 2px 0 0; }
.chev.lt { transform: rotate(-135deg); } .chev.gt { transform: rotate(45deg); margin-left: auto; margin-right: 6px; }
.chev.up { transform: rotate(-45deg); } .chev.dn { transform: rotate(135deg); margin-top: auto; }
.vscroll { display: flex; flex-direction: column; align-items: center; width: 16px; flex: none; background: #ededed; padding: 6px 2px 20px 0; }
.vthumb { width: 12px; height: 15px; background: #cdcdcd; margin-top: 4px; }
.editcol { width: 13px; flex: none; overflow: hidden; padding: 5px 0 0 4px; background: #646464; }
.editcol .vstrip { width: 17px; }
.vstrip.edits { height: 275px; margin-bottom: 7px; }
.vstrip.ord { height: 97px; display: flex; flex-direction: column; align-items: center; justify-content: space-between; }
.cmd { display: flex; height: 15px; flex: none; border-top: 5px solid #646464; }
.dotgrip { width: 17px; margin: 0 3px 0 4px; background: repeating-linear-gradient(90deg, #8a8a8a 0 1px, #707070 1px 3px); }
.prompt { flex: 1; background: #c6c6c6; overflow: hidden; padding: 0 2px; font: 14px/18px "Liberation Mono", "Noto Sans CJK SC", monospace; }

.dialog { position: absolute; right: 4px; top: 7px; width: 470px; display: flex; flex-direction: column; background: #f0f0f0; border: 1px solid #5f84ab; font: 10px/12px "Liberation Mono", "Noto Sans CJK SC", monospace; color: #111; }
.dtitle { display: flex; align-items: center; gap: 5px; height: 21px; padding: 0 9px 0 2px; background: #fff; }
.dtitle h3 { flex: 1; font-size: 11px; }
.logo { width: 13px; height: 13px; }
.close svg { width: 10px; height: 10px; }
.dbody { display: flex; gap: 11px; padding: 7px 8px 7px 11px; }
.left { width: 277px; flex: none; }
.right { flex: 1; min-width: 0; display: flex; flex-direction: column; }
.dtabs { display: flex; align-items: flex-end; height: 17px; }
.dtabs button { height: 14px; padding: 0 4px; border: 1px solid #dcdcdc; border-bottom: 0; background: #f3f3f3; }
.dtabs .on { height: 17px; background: #fff; margin-bottom: -1px; position: relative; }
.panel { padding: 4px 9px 7px 7px; background: #fff; border: 1px solid #dcdcdc; }
fieldset { min-width: 0; margin: 0; padding: 0 0 0 8px; border: 1px solid #dcdcdc; }
fieldset + fieldset { margin-top: 3px; }
legend { height: 12px; margin-left: -4px; padding: 0 3px; }
label, .brow span, .pick span { white-space: nowrap; }
.dim, .pick span { color: #9b9b9b; }
.types { display: grid; grid-template-columns: 104px 1fr; grid-template-rows: 25px 26px 20px 26px 26px; align-items: center; padding-bottom: 1px; }
.types > div { display: flex; align-items: center; }
.w100 { width: 101px; }
.tall { height: 19px; }
.dots { width: 19px; height: 17px; background: #e2e2e2; border: 1px solid #adadad; }
.dots:disabled, .preview:disabled { background: #cacaca; border-color: #c2c2c2; color: #888; }
.box { width: 10px; height: 10px; margin-left: 3px; border: 1px solid #333; background: #fff; }
.bg { width: 34px; margin-left: 4px; }
.bg svg { width: 11px; height: 11px; margin-left: 3px; }
.sample { width: 73px; height: 16px; border: 1px solid #999; border-width: 2px 0 0 2px; background: repeating-linear-gradient(135deg, #000 0 5px, #d0d0d0 5px 6px); }
.off { background: #cacaca; border-color: #c4c4c4; color: #777; }
.off::after { border-color: #aaa; }
.off select:disabled { color: #777; }
.angles { display: grid; grid-template-columns: 104px 1fr; grid-template-rows: 15px 20px 32px 19px 27px; align-items: center; padding: 5px 0 2px; }
.angles > div { display: flex; }
.edit.combo { width: 87px; background: #fff; border-color: #777; }
.chk { display: flex; align-items: center; gap: 3px; }
.chk input { appearance: none; position: relative; width: 12px; height: 12px; margin: 0; border: 1px solid #333; background: #fff; flex: none; }
.chk input:disabled { border-color: #c8c8c8; }
.chk input[type="checkbox"]:checked::after { content: ""; position: absolute; left: 3px; top: 1px; width: 3px; height: 6px; border: solid #333; border-width: 0 1px 1px 0; transform: rotate(40deg); }
.chk input[type="radio"] { border-radius: 50%; }
.chk input[type="radio"]:checked::after { content: ""; position: absolute; left: 2px; top: 2px; width: 6px; height: 6px; border-radius: 50%; background: #222; }
.num { width: 59px; height: 17px; padding: 0 2px; border: 1px solid #c4c4c4; background: #fff; font: inherit; color: #777; }
.origin { display: flex; gap: 17px; height: 125px; }
.olist { display: grid; grid-template-rows: 19px 19px 21px 21px 18px 21px; align-items: center; width: 160px; padding-top: 6px; }
.in1 { margin-left: 19px; }
.in2 { margin-left: 47px; display: flex; }
.in2 .combo { width: 112px; height: 16px; }
.pick { display: flex; align-items: center; gap: 10px; }
.brick { width: 32px; height: 34px; margin-top: 69px; }
.sq { display: flex; align-items: center; justify-content: center; width: 17px; height: 17px; background: #d9d9d9; border: 1px solid #b8b8b8; flex: none; }
.sq:disabled { background: #cacaca; border-color: #c2c2c2; }
.sq .ic { width: 13px; height: 13px; }
.sq.hot { border: 2px solid #2f7fd0; background: #bcd6ef; }
.preview { display: block; width: 69px; height: 18px; margin-top: 9px; border: 1px solid #c2c2c2; }
.bounds { padding: 1px 0 5px; }
.brow { display: flex; align-items: center; gap: 16px; height: 29px; }
.right fieldset + fieldset { margin-top: 6px; }
.opts .chk { height: 19px; }
.opts legend + .chk { margin-top: 4px; }
.drop { display: grid; grid-template-rows: 13px 17px; width: 137px; margin-top: 8px; }
.opts .chk + .drop { margin-top: 5px; }
.opacity { display: flex; align-items: center; gap: 8px; padding: 8px 15px 9px 0; }
.opacity .num { width: 26px; text-align: center; color: #222; border-color: #999; }
input[type="range"] { appearance: none; flex: 1; min-width: 0; height: 12px; margin: 0; background: linear-gradient(#d8d8d8, #d8d8d8) center / 100% 2px no-repeat; }
input[type="range"]::-webkit-slider-thumb { appearance: none; width: 6px; height: 12px; background: #1177cc; }
.inherit.brow { height: 18px; margin: 8px 0 0 9px; }
.moreopts { width: 14px; height: 14px; margin: auto 8px 5px auto; }
.moreopts svg { width: 14px; height: 14px; }

.mark { position: absolute; z-index: 4; left: 36px; top: 35px; width: 196px; height: 50px; overflow: visible; }
.mark text { font-style: italic; font-weight: 700; }
.zh { font-family: "Noto Sans CJK SC", sans-serif; font-size: 32px; }
.en { font-family: Lato, sans-serif; font-size: 35px; }
.face { fill: #fff; filter: drop-shadow(2px 2px 0 #2b2b2b) drop-shadow(-2px -2px 0 #2b2b2b) drop-shadow(1px -1px 0 #2b2b2b) drop-shadow(-1px 1px 0 #2b2b2b); }
.badge { position: absolute; z-index: 5; right: 70px; bottom: 17px; display: flex; align-items: center; gap: 16px; width: 235px; height: 115px; padding-left: 14px; background: #202d54; color: #ced1d6; }
.badge svg { width: 48px; height: 50px; }
.big { display: flex; gap: 4px; font: 700 34px/38px "Noto Sans CJK SC", sans-serif; }
.url { font: 17px/20px "DejaVu Sans", sans-serif; }
</style>
